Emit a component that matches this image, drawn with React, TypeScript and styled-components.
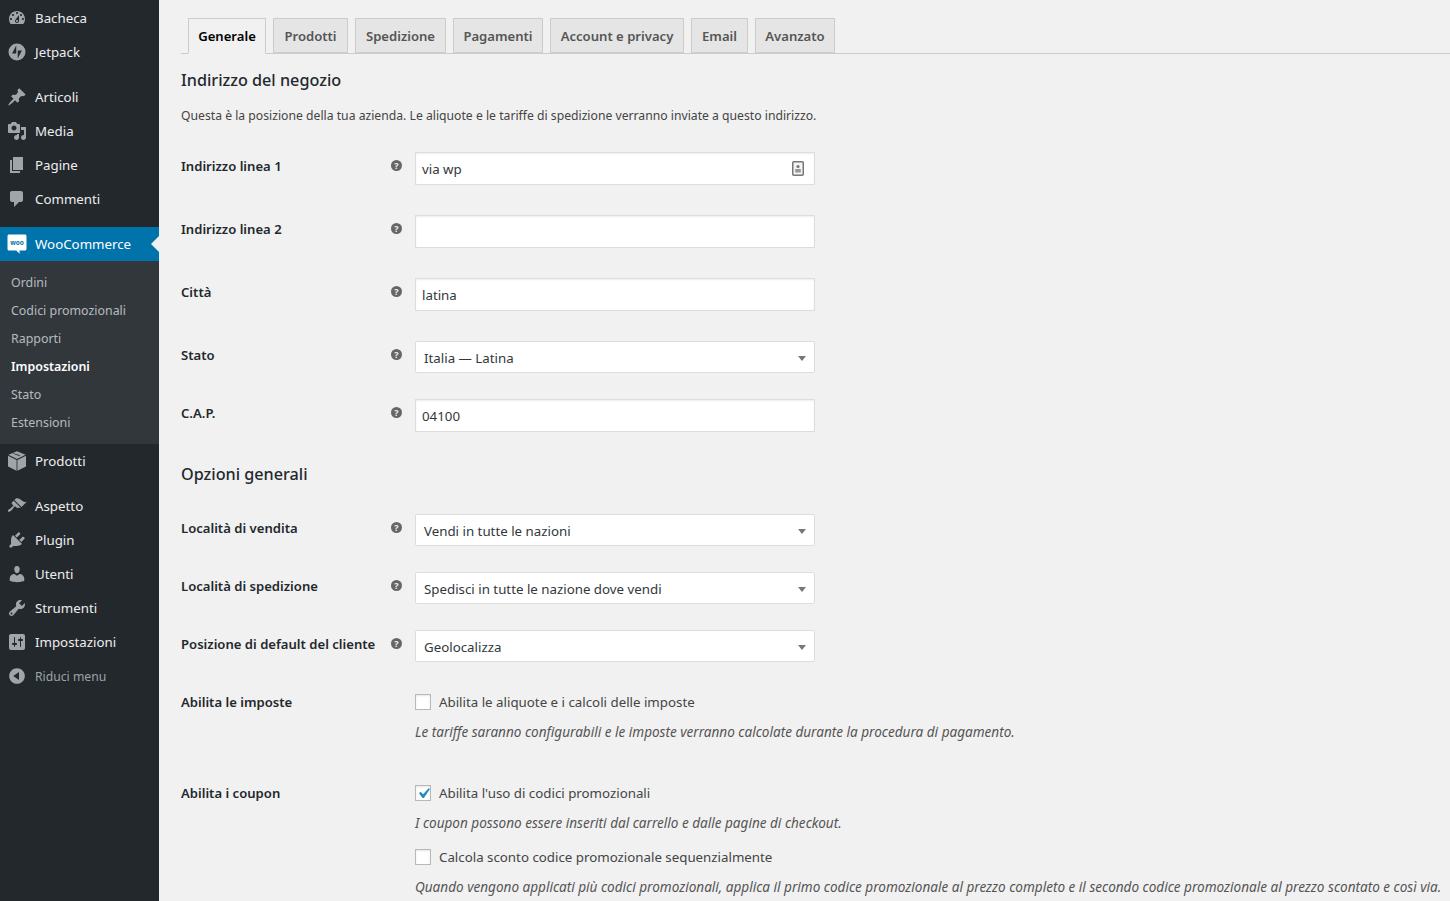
import React from 'react';
import styled, { createGlobalStyle } from 'styled-components';

const GlobalStyle = createGlobalStyle`
  html, body { margin: 0; padding: 0; height: 100%; overflow: hidden; }
  body {
    background: #f1f1f1;
    color: #444;
    font-family: "Noto Sans", "Open Sans", sans-serif;
    font-size: 13px;
  }
`;

const ICONS: Record<string, string> = {
  dashboard:
    'M3.76 16h12.48c1.1-1.37 1.76-3.11 1.76-5 0-4.42-3.58-8-8-8s-8 3.58-8 8c0 1.89.66 3.63 1.76 5zM10 4c.55 0 1 .45 1 1s-.45 1-1 1-1-.45-1-1 .45-1 1-1zM6 6c.55 0 1 .45 1 1s-.45 1-1 1-1-.45-1-1 .45-1 1-1zm8 0c.55 0 1 .45 1 1s-.45 1-1 1-1-.45-1-1 .45-1 1-1zm-5.37 5.55L12 7v6c0 1.1-.9 2-2 2s-2-.9-2-2c0-.57.24-1.08.63-1.45zM4 10c.55 0 1 .45 1 1s-.45 1-1 1-1-.45-1-1 .45-1 1-1zm12 0c.55 0 1 .45 1 1s-.45 1-1 1-1-.45-1-1 .45-1 1-1zm-5 3c0-.55-.45-1-1-1s-1 .45-1 1 .45 1 1 1 1-.45 1-1z',
  jetpack:
    'M10 1.5a8.5 8.5 0 1 0 0 17 8.5 8.5 0 0 0 0-17zM9.24 11.62H5.07l4.17-8.16zM10.76 16.55V8.38h4.17z',
  post:
    'M10.44 3.02l1.82-1.82 6.36 6.35-1.83 1.82c-1.05-.68-2.48-.57-3.41.36l-.75.75c-.92.93-1.04 2.35-.35 3.41l-1.83 1.82-2.41-2.41-2.8 2.79c-.42.42-3.38 2.71-3.8 2.29s1.86-3.39 2.28-3.81l2.79-2.79L4.1 9.36l1.83-1.82c1.05.69 2.48.57 3.4-.36l.75-.75c.93-.92 1.05-2.35.36-3.41z',
  media:
    'M13 11V4c0-.55-.45-1-1-1h-1.67L9 1H5L3.67 3H2c-.55 0-1 .45-1 1v7c0 .55.45 1 1 1h10c.55 0 1-.45 1-1zM7 4.5c1.38 0 2.5 1.12 2.5 2.5S8.38 9.5 7 9.5 4.5 8.38 4.5 7 5.62 4.5 7 4.5zM14 6h5v10.5c0 1.38-1.12 2.5-2.5 2.5S14 17.88 14 16.5s1.12-2.5 2.5-2.5c.17 0 .34.02.5.05V9h-3V6zm-4 8.05V13h2v3.5c0 1.38-1.12 2.5-2.5 2.5S7 17.88 7 16.5 8.12 14 9.5 14c.17 0 .34.02.5.05z',
  page: 'M6 15V2h10v13H6zm-1 1h8v2H3V5h2v11z',
  comments:
    'M5 2h9c1.1 0 2 .9 2 2v7c0 1.1-.9 2-2 2h-2l-5 5v-5H5c-1.1 0-2-.9-2-2V4c0-1.1.9-2 2-2z',
  product:
    'M10 .2l8.6 3.6L10 7.9 1.4 3.8zM1 4.8l8.6 4.1v10.9L1 15.6zM19 4.8v10.8l-8.6 4.2V8.9zM13 4.2l-6.5-2-.9.4 6.6 2.4z',
  appearance:
    'M14.48 11.06L7.41 3.99l1.5-1.5c.5-.56 2.3-.47 3.51.32 1.21.8 1.43 1.28 2.91 2.1 1.18.64 2.45 1.26 4.45.85zm-.71.71L6.7 4.7 4.93 6.47c-.39.39-.39 1.02 0 1.41l1.06 1.06c.39.39.39 1.03 0 1.42-.6.6-1.43 1.11-2.21 1.69-.35.26-.7.53-1.01.84C1.43 13.23.4 14.91 1.1 15.6c.7.7 2.38-.33 3.72-1.67.31-.31.58-.66.85-1.02.57-.78 1.08-1.61 1.69-2.21.39-.39 1.02-.39 1.41 0l1.06 1.06c.39.39 1.02.39 1.41 0z',
  plugins:
    'M13.11 4.36L9.87 7.6 8 5.73l3.24-3.24c.35-.34 1.05-.2 1.56.32.52.51.66 1.21.31 1.55zm-8 1.77l.91-1.12 9.01 9.01-1.19.84c-.71.71-2.63 1.16-3.82 1.16H6.14L4.9 17.26c-.59.59-1.54.59-2.12 0-.59-.58-.59-1.53 0-2.12l1.24-1.24v-3.88c0-1.13.4-3.19 1.09-3.89zm7.26 3.97l3.24-3.24c.34-.35 1.04-.21 1.55.31.52.51.66 1.21.31 1.55l-3.24 3.25z',
  users:
    'M10 9.25c-2.27 0-2.73-3.44-2.73-3.44C7 4.02 7.82 2 9.97 2c2.16 0 2.98 2.02 2.71 3.81 0 0-.41 3.44-2.68 3.44zm0 2.57L12.72 10c2.39 0 4.52 2.33 4.52 4.53v2.49s-3.65 1.13-7.24 1.13c-3.65 0-7.24-1.13-7.24-1.13v-2.49c0-2.25 1.94-4.48 4.47-4.48z',
  tools:
    'M16.68 9.77c-1.34 1.34-3.3 1.67-4.95.99l-5.41 6.52c-.99.99-2.59.99-3.58 0s-.99-2.59 0-3.57l6.52-5.42c-.68-1.65-.35-3.61.99-4.95 1.28-1.28 3.12-1.62 4.72-1.06l-2.89 2.89 2.82 2.82 2.86-2.87c.53 1.58.18 3.39-1.08 4.67zM3.81 16.21c.4.39 1.04.39 1.43 0 .4-.4.4-1.04 0-1.43-.39-.4-1.03-.4-1.43 0-.39.39-.39 1.03 0 1.43z',
  settings:
    'M18 16V4c0-1.1-.9-2-2-2H4c-1.1 0-2 .9-2 2v12c0 1.1.9 2 2 2h12c1.1 0 2-.9 2-2zM8 11h1c.55 0 1 .45 1 1s-.45 1-1 1H8v1.5c0 .28-.22.5-.5.5s-.5-.22-.5-.5V13H6c-.55 0-1-.45-1-1s.45-1 1-1h1V5.5c0-.28.22-.5.5-.5s.5.22.5.5V11zm5-2h-1c-.55 0-1-.45-1-1s.45-1 1-1h1V5.5c0-.28.22-.5.5-.5s.5.22.5.5V7h1c.55 0 1 .45 1 1s-.45 1-1 1h-1v5.5c0 .28-.22.5-.5.5s-.5-.22-.5-.5V9z',
  collapse:
    'M10 2.16c4.33 0 7.84 3.51 7.84 7.84s-3.51 7.84-7.84 7.84S2.16 14.33 2.16 10 5.71 2.16 10 2.16zm2 11.72V6.12L6.18 9.97z',
};

const Page = styled.div`
  display: flex;
  height: 901px;
  overflow: hidden;
`;

const Sidebar = styled.nav`
  flex: 0 0 159px;
  background: #23282d;
  padding-top: 1px;
`;

const MenuItem = styled.div<{ $active?: boolean; $muted?: boolean; $gap?: boolean }>`
  position: relative;
  display: flex;
  align-items: center;
  box-sizing: border-box;
  height: 34px;
  margin-top: ${(p) => (p.$gap ? '11px' : '0')};
  padding: 0 0 ${(p) => (p.$muted ? '0' : '1px')} 7px;
  gap: 8px;
  font-size: ${(p) => (p.$muted ? '12.2px' : '13.3px')};
  background: ${(p) => (p.$active ? '#0073aa' : 'transparent')};
  color: ${(p) => (p.$active ? '#fff' : p.$muted ? '#9ea3a8' : '#eee')};
  svg { flex: none; fill: #a0a5aa; }
`;

const ActiveArrow = styled.span`
  position: absolute;
  right: 0;
  top: 9px;
  border: 8px solid transparent;
  border-left-width: 0;
  border-right-color: #f1f1f1;
`;

const SubMenu = styled.div`
  background: #32373c;
  padding: 8px 0 7px;
`;

const SubItem = styled.div<{ $current?: boolean }>`
  height: 28px;
  line-height: 28px;
  padding-left: 11px;
  font-size: 12.4px;
  color: ${(p) => (p.$current ? '#fff' : 'rgba(240, 245, 250, 0.7)')};
  font-weight: ${(p) => (p.$current ? 600 : 400)};
`;

const Main = styled.main`
  flex: 1;
  min-width: 0;
  padding: 18px 0 0 22px;
`;

const TabBar = styled.div`
  display: flex;
  gap: 7px;
  height: 35px;
  padding-left: 7px;
  border-bottom: 1px solid #ccc;
`;

const Tab = styled.div<{ $active?: boolean; $width: number }>`
  box-sizing: border-box;
  flex: 0 0 ${(p) => p.$width}px;
  height: ${(p) => (p.$active ? 36 : 35)}px;
  border: 1px solid #ccc;
  border-bottom-color: ${(p) => (p.$active ? '#f1f1f1' : '#ccc')};
  background: ${(p) => (p.$active ? '#f1f1f1' : '#e5e5e5')};
  color: ${(p) => (p.$active ? '#000' : '#555')};
  font-size: 13.1px;
  font-weight: 600;
  line-height: 34px;
  text-align: center;
  white-space: nowrap;
`;

const SectionTitle = styled.h2<{ $top: number; $bottom: number }>`
  margin: ${(p) => p.$top}px 0 ${(p) => p.$bottom}px;
  color: #23282d;
  font-size: 16.2px;
  font-weight: 500;
  line-height: 24px;
`;

const Intro = styled.p`
  margin: 0 0 27px;
  color: #444;
  font-size: 12.2px;
  line-height: 18px;
`;

const Row = styled.div<{ $height: number }>`
  display: grid;
  grid-template-columns: 204px 30px 1fr;
  height: ${(p) => p.$height}px;
`;

const Label = styled.label<{ $top?: number }>`
  padding-top: ${(p) => p.$top ?? 4}px;
  color: #23282d;
  font-size: 13.1px;
  font-weight: 600;
  line-height: 20px;
  white-space: nowrap;
`;

const Help = styled.span`
  display: block;
  box-sizing: border-box;
  width: 11px;
  height: 11px;
  margin: 8px 0 0 6px;
  border-radius: 50%;
  background: #666;
  color: #f1f1f1;
  font-size: 9px;
  font-weight: 700;
  line-height: 11px;
  text-align: center;
`;

const Field = styled.div`
  position: relative;
  box-sizing: border-box;
  width: 400px;
  height: 33px;
  padding: 0 6px;
  border: 1px solid #ddd;
  background: #fff;
  color: #32373c;
  font-size: 13.3px;
  line-height: 32px;
  box-shadow: inset 0 1px 2px rgba(0, 0, 0, 0.07);
`;

const FieldIcon = styled.svg`
  position: absolute;
  right: 10px;
  top: 8px;
`;

const SelectBox = styled(Field)`
  height: 32px;
  padding-left: 8px;
  border-radius: 2px;
  box-shadow: none;
  line-height: 32px;
`;

const Caret = styled.span`
  position: absolute;
  right: 8px;
  top: 14px;
  border-style: solid;
  border-width: 5px 4px 0;
  border-color: #777 transparent transparent;
`;

const Options = styled.div`
  padding-top: 1px;
`;

const OptionLine = styled.div<{ $height: number }>`
  display: flex;
  align-items: center;
  gap: 8px;
  height: ${(p) => p.$height}px;
  color: #444;
  font-size: 13.3px;
`;

const Box = styled.span`
  position: relative;
  display: block;
  flex: none;
  box-sizing: border-box;
  width: 16px;
  height: 16px;
  border: 1px solid #b4b9be;
  background: #fff;
  box-shadow: inset 0 1px 2px rgba(0, 0, 0, 0.1);
  svg { position: absolute; left: -3px; top: -3px; fill: #1e8cbe; }
`;

const Note = styled.div<{ $height: number }>`
  height: ${(p) => p.$height}px;
  margin-top: 11px;
  color: #555;
  font-size: 13.55px;
  font-style: italic;
  line-height: 20px;
  white-space: nowrap;
`;

const MenuIcon = ({ name }: { name: string }) => (
  <svg width="20" height="20" viewBox="0 0 20 20" aria-hidden="true">
    <path fillRule="evenodd" d={ICONS[name]} />
  </svg>
);

const WooIcon = () => (
  <svg width="20" height="20" viewBox="0 0 20 20" aria-hidden="true">
    <path
      style={{ fill: '#fff' }}
      d="M2 .5h16c.8 0 1.5.7 1.5 1.5v13c0 .8-.7 1.5-1.5 1.5h-5.6l.4 3.2-3.6-3.2H2c-.8 0-1.5-.7-1.5-1.5V2C.5 1.2 1.2.5 2 .5z"
    />
    <text x="10" y="11" fontSize="6.5" fontWeight="700" textAnchor="middle" style={{ fill: '#0073aa' }}>
      woo
    </text>
  </svg>
);

const topMenu = [
  { icon: 'dashboard', label: 'Bacheca' },
  { icon: 'jetpack', label: 'Jetpack' },
  { icon: 'post', label: 'Articoli', gap: true },
  { icon: 'media', label: 'Media' },
  { icon: 'page', label: 'Pagine' },
  { icon: 'comments', label: 'Commenti' },
];

const bottomMenu = [
  { icon: 'appearance', label: 'Aspetto', gap: true },
  { icon: 'plugins', label: 'Plugin' },
  { icon: 'users', label: 'Utenti' },
  { icon: 'tools', label: 'Strumenti' },
  { icon: 'settings', label: 'Impostazioni' },
];

const subMenu = ['Ordini', 'Codici promozionali', 'Rapporti', 'Impostazioni', 'Stato', 'Estensioni'];

const tabs = [
  { label: 'Generale', width: 78 },
  { label: 'Prodotti', width: 75 },
  { label: 'Spedizione', width: 91 },
  { label: 'Pagamenti', width: 90 },
  { label: 'Account e privacy', width: 134 },
  { label: 'Email', width: 57 },
  { label: 'Avanzato', width: 80 },
];

const TextRow = ({ label, value, height, contact }: { label: string; value?: string; height: number; contact?: boolean }) => (
  <Row $height={height}>
    <Label>{label}</Label>
    <Help>?</Help>
    <Field>
      {value}
      {contact && (
        <FieldIcon width="12" height="15" viewBox="0 0 12 15" aria-hidden="true">
          <rect x="0.75" y="0.75" width="10.5" height="13.5" rx="1" fill="#f4f4f4" stroke="#777" strokeWidth="1.5" />
          <circle cx="6" cy="5.5" r="1.6" fill="#777" />
          <rect x="3.2" y="8" width="5.6" height="3.5" fill="#999" />
        </FieldIcon>
      )}
    </Field>
  </Row>
);

const SelectRow = ({ label, value, height }: { label: string; value: string; height: number }) => (
  <Row $height={height}>
    <Label>{label}</Label>
    <Help>?</Help>
    <SelectBox>
      {value}
      <Caret />
    </SelectBox>
  </Row>
);

const App = () => (
  <Page>
    <GlobalStyle />
    <Sidebar>
      {topMenu.map((item) => (
        <MenuItem key={item.label} $gap={item.gap}>
          <MenuIcon name={item.icon} />
          {item.label}
        </MenuItem>
      ))}
      <MenuItem $active $gap>
        <WooIcon />
        WooCommerce
        <ActiveArrow />
      </MenuItem>
      <SubMenu>
        {subMenu.map((label) => (
          <SubItem key={label} $current={label === 'Impostazioni'}>
            {label}
          </SubItem>
        ))}
      </SubMenu>
      <MenuItem>
        <MenuIcon name="product" />
        Prodotti
      </MenuItem>
      {bottomMenu.map((item) => (
        <MenuItem key={item.label} $gap={item.gap}>
          <MenuIcon name={item.icon} />
          {item.label}
        </MenuItem>
      ))}
      <MenuItem $muted>
        <MenuIcon name="collapse" />
        Riduci menu
      </MenuItem>
    </Sidebar>
    <Main>
      <TabBar>
        {tabs.map((tab) => (
          <Tab key={tab.label} $width={tab.width} $active={tab.label === 'Generale'}>
            {tab.label}
          </Tab>
        ))}
      </TabBar>
      <SectionTitle $top={14} $bottom={15}>Indirizzo del negozio</SectionTitle>
      <Intro>Questa è la posizione della tua azienda. Le aliquote e le tariffe di spedizione verranno inviate a questo indirizzo.</Intro>
      <TextRow label="Indirizzo linea 1" value="via wp" height={63} contact />
      <TextRow label="Indirizzo linea 2" height={63} />
      <TextRow label="Città" value="latina" height={63} />
      <SelectRow label="Stato" value="Italia — Latina" height={58} />
      <TextRow label="C.A.P." value="04100" height={33} />
      <SectionTitle $top={30} $bottom={28}>Opzioni generali</SectionTitle>
      <SelectRow label="Località di vendita" value="Vendi in tutte le nazioni" height={58} />
      <SelectRow label="Località di spedizione" value="Spedisci in tutte le nazione dove vendi" height={58} />
      <SelectRow label="Posizione di default del cliente" value="Geolocalizza" height={62} />
      <Row $height={91}>
        <Label $top={0}>Abilita le imposte</Label>
        <span />
        <Options>
          <OptionLine $height={18}>
            <Box />
            Abilita le aliquote e i calcoli delle imposte
          </OptionLine>
          <Note $height={20}>Le tariffe saranno configurabili e le imposte verranno calcolate durante la procedura di pagamento.</Note>
        </Options>
      </Row>
      <Row $height={140}>
        <Label $top={0}>Abilita i coupon</Label>
        <span />
        <Options>
          <OptionLine $height={18}>
            <Box>
              <svg width="21" height="21" viewBox="0 0 20 20" aria-hidden="true">
                <path d="M14.83 4.89l1.34.94-5.81 8.38H9.02L5.78 9.67l1.34-1.25 2.57 2.4z" />
              </svg>
            </Box>
            Abilita l'uso di codici promozionali
          </OptionLine>
          <Note $height={35}>I coupon possono essere inseriti dal carrello e dalle pagine di checkout.</Note>
          <OptionLine $height={18}>
            <Box />
            Calcola sconto codice promozionale sequenzialmente
          </OptionLine>
          <Note $height={20}>Quando vengono applicati più codici promozionali, applica il primo codice promozionale al prezzo completo e il secondo codice promozionale al prezzo scontato e così via.</Note>
        </Options>
      </Row>
    </Main>
  </Page>
);

export default App;
